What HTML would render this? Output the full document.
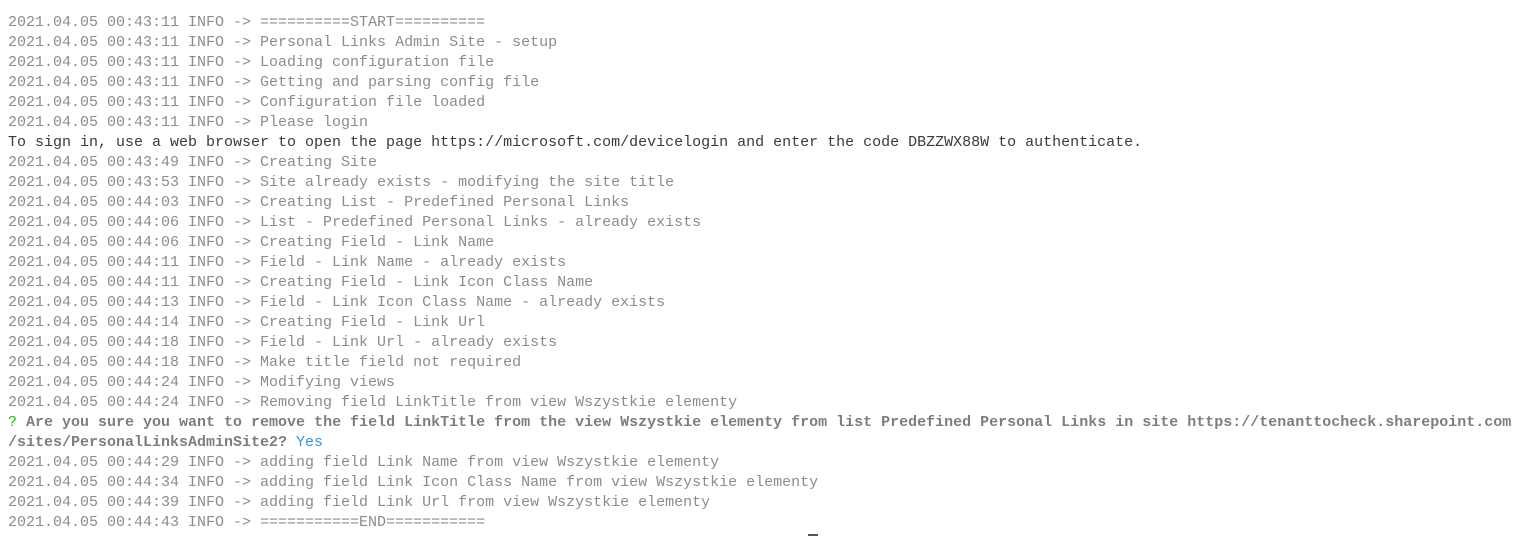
<!DOCTYPE html>
<html><head><style>
body{margin:0;background:#fff;width:1518px;height:538px;overflow:hidden;position:relative}
pre{margin:0;position:absolute;left:8px;top:13px;font-family:"Liberation Mono",monospace;font-size:15px;line-height:20px;color:#8c8c8c;letter-spacing:0}
.w{color:#3a3a3a}.b{font-weight:bold;color:#7e7e7e}.g{color:#16c60c;font-weight:normal}.c{color:#3a96dd;font-weight:normal}
.cur{position:absolute;left:808px;top:534px;width:10px;height:2px;background:#555}
</style></head><body><pre>2021.04.05 00:43:11 INFO -> ==========START==========
2021.04.05 00:43:11 INFO -> Personal Links Admin Site - setup
2021.04.05 00:43:11 INFO -> Loading configuration file
2021.04.05 00:43:11 INFO -> Getting and parsing config file
2021.04.05 00:43:11 INFO -> Configuration file loaded
2021.04.05 00:43:11 INFO -> Please login
<span class="w">To sign in, use a web browser to open the page https://microsoft.com/devicelogin and enter the code DBZZWX88W to authenticate.</span>
2021.04.05 00:43:49 INFO -> Creating Site
2021.04.05 00:43:53 INFO -> Site already exists - modifying the site title
2021.04.05 00:44:03 INFO -> Creating List - Predefined Personal Links
2021.04.05 00:44:06 INFO -> List - Predefined Personal Links - already exists
2021.04.05 00:44:06 INFO -> Creating Field - Link Name
2021.04.05 00:44:11 INFO -> Field - Link Name - already exists
2021.04.05 00:44:11 INFO -> Creating Field - Link Icon Class Name
2021.04.05 00:44:13 INFO -> Field - Link Icon Class Name - already exists
2021.04.05 00:44:14 INFO -> Creating Field - Link Url
2021.04.05 00:44:18 INFO -> Field - Link Url - already exists
2021.04.05 00:44:18 INFO -> Make title field not required
2021.04.05 00:44:24 INFO -> Modifying views
2021.04.05 00:44:24 INFO -> Removing field LinkTitle from view Wszystkie elementy
<span class="b"><span class="g">?</span> Are you sure you want to remove the field LinkTitle from the view Wszystkie elementy from list Predefined Personal Links in site https://tenanttocheck.sharepoint.com
/sites/PersonalLinksAdminSite2? <span class="c">Yes</span></span>
2021.04.05 00:44:29 INFO -> adding field Link Name from view Wszystkie elementy
2021.04.05 00:44:34 INFO -> adding field Link Icon Class Name from view Wszystkie elementy
2021.04.05 00:44:39 INFO -> adding field Link Url from view Wszystkie elementy
2021.04.05 00:44:43 INFO -> ===========END===========</pre><div class="cur"></div></body></html>
